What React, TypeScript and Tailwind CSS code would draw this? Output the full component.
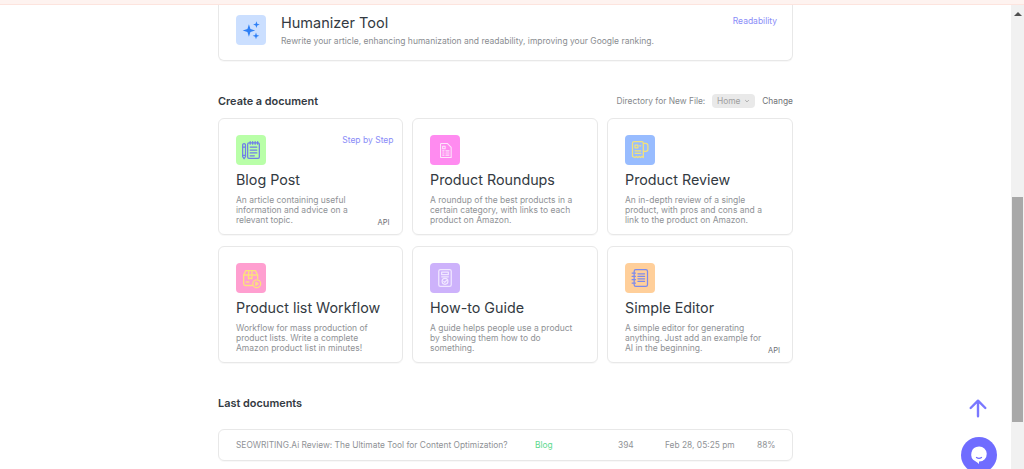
import React from 'react';

const iconStroke = { fill: 'none', strokeWidth: 1.5, strokeLinecap: 'round', strokeLinejoin: 'round' } as const;

const Sparkles = () => (
  <svg viewBox="0 0 24 24" className="w-[20px] h-[20px]" fill="#2f80f6">
    <path d="M9.5 5 L11.3 10.7 L17 12.5 L11.3 14.3 L9.5 20 L7.7 14.3 L2 12.5 L7.7 10.7 Z" />
    <path d="M18.5 1.5 L19.5 4.5 L22.5 5.5 L19.5 6.5 L18.5 9.5 L17.5 6.5 L14.5 5.5 L17.5 4.5 Z" />
    <path d="M18 15 L19 18 L22 19 L19 20 L18 23 L17 20 L14 19 L17 18 Z" />
  </svg>
);

const BlogIcon = () => (
  <svg viewBox="0 0 24 24" className="w-[20px] h-[20px]" stroke="#6f7fe8" {...iconStroke}>
    <path d="M2 6a1.7 1.7 0 0 1 3.4 0v14l-1.7 2.5L2 20Z" />
    <path d="M2 8.5h3.4M2 18.5h3.4" />
    <rect x="8" y="3.5" width="14" height="18.5" rx="1.5" />
    <path d="M11 2v3M14 2v3M17 2v3M20 2v3" />
    <path d="M11 8.5h8M11 12h8M11 15.5h8M11 19h5" />
  </svg>
);

const RoundupIcon = () => (
  <svg viewBox="0 0 24 24" className="w-[17px] h-[17px]" stroke="#fde6fb" {...iconStroke}>
    <path d="M6 2h8.5L20 7.5V22H6a1 1 0 0 1-1-1V3a1 1 0 0 1 1-1Z" />
    <rect x="8" y="6" width="3.5" height="3.5" />
    <path d="M8 12.5h2M12.5 12.5h4.5M8 15.5h2M12.5 15.5h4.5M8 18.5h2M12.5 18.5h4.5" />
  </svg>
);

const ReviewIcon = () => (
  <svg viewBox="0 0 24 24" className="w-[20px] h-[20px]" stroke="#f3e27a" {...iconStroke}>
    <path d="M3 4a2 2 0 0 1 2-2h9a2 2 0 0 1 2 2v17l-1.7-1.3-1.7 1.3-1.6-1.3-1.7 1.3-1.6-1.3-1.7 1.3L3 19.7Z" />
    <path d="M16 4h3a2.5 2.5 0 0 1 2.5 2.5V11a2.5 2.5 0 0 1-2.5 2.5h-3" />
    <rect x="6" y="6" width="3.5" height="3.5" />
    <path d="M6 13h7M6 16h7M11.5 7h1.5" />
  </svg>
);

const WorkflowIcon = () => (
  <svg viewBox="0 0 24 24" className="w-[21px] h-[21px]" stroke="#fbe27c" {...iconStroke}>
    <path d="M13 20H5a2 2 0 0 1-2-2V8l2.5-5h11L19 8v4" />
    <path d="M3 8h16M9 3 8.5 8v4.5l2-1 2 1V8L12.500 3" />
    <path d="M6 16h3" />
    <circle cx="18" cy="18" r="4.5" />
    <path d="M17 16.2v3.6l2.5-1.8Z" />
  </svg>
);

const GuideIcon = () => (
  <svg viewBox="0 0 24 24" className="w-[20px] h-[20px]" stroke="#f1e7ff" {...iconStroke}>
    <rect x="4.5" y="2" width="15" height="20" rx="2" />
    <rect x="8" y="5" width="8" height="3" />
    <path d="M8 10.5h8" />
    <circle cx="12" cy="16" r="3.5" />
    <path d="m10.5 16 1.2 1.2 2-2.2" />
  </svg>
);

const EditorIcon = () => (
  <svg viewBox="0 0 24 24" className="w-[20px] h-[20px]" stroke="#7d8bec" {...iconStroke}>
    <rect x="5" y="2" width="16" height="20" rx="2" />
    <path d="M2.5 6h4M2.5 10h4M2.5 14h4M2.5 18h4" />
    <path d="M9.5 7h8M9.5 10h8M9.5 13h8M9.5 16h8" />
  </svg>
);

const cards = [
  { title: 'Blog Post', lines: ['An article containing useful', 'information and advice on a', 'relevant topic.'], bg: 'bg-[#b9ffa8]', icon: <BlogIcon />, step: true, api: true },
  { title: 'Product Roundups', lines: ['A roundup of the best products in a', 'certain category, with links to each', 'product on Amazon.'], bg: 'bg-[#ff8bf0]', icon: <RoundupIcon /> },
  { title: 'Product Review', lines: ['An in-depth review of a single', 'product, with pros and cons and a', 'link to the product on Amazon.'], bg: 'bg-[#98bcff]', icon: <ReviewIcon /> },
  { title: 'Product list Workflow', lines: ['Workflow for mass production of', 'product lists. Write a complete', 'Amazon product list in minutes!'], bg: 'bg-[#ff9fd0]', icon: <WorkflowIcon /> },
  { title: 'How-to Guide', lines: ['A guide helps people use a product', 'by showing them how to do', 'something.'], bg: 'bg-[#cdb2fb]', icon: <GuideIcon /> },
  { title: 'Simple Editor', lines: ['A simple editor for generating', 'anything. Just add an example for', 'AI in the beginning.'], bg: 'bg-[#ffcf9a]', icon: <EditorIcon />, api: true },
];

const App: React.FC = () => {
  return (
    <div className="relative flex h-[469px] w-[1024px] overflow-hidden bg-white font-['Inter',sans-serif]">
      {/* Main column */}
      <div className="flex-1 min-w-0">
        <div className="h-[5px] bg-[#fef3f0] border-b border-[#fde4de]" />
        <div className="w-[575px] ml-[218px]">
          {/* Humanizer card */}
          <div className="relative flex h-[56px] rounded-b-md border border-t-0 border-[#e8e8e8] pl-[17px] pt-[10px] shadow-[0_1px_1px_rgba(0,0,0,0.03)]">
            <div className="flex h-[30px] w-[30px] items-center justify-center rounded bg-[#cbdfff]">
              <Sparkles />
            </div>
            <div className="ml-[15px]">
              <div className="text-[14.5px] leading-[16px] text-[#333a42]">Humanizer Tool</div>
              <div className="mt-[4px] text-[8.5px] leading-[12px] text-[#8a8d91]">
                Rewrite your article, enhancing humanization and readability, improving your Google ranking.
              </div>
            </div>
            <span className="absolute right-[15px] top-[10px] text-[8.5px] leading-[12px] text-[#8a8cf8]">Readability</span>
          </div>

          {/* Create a document */}
          <div className="mt-[32px] flex h-[16px] items-center justify-between">
            <h2 className="text-[10.9px] font-semibold text-[#333a42]">Create a document</h2>
            <div className="flex items-center text-[8.4px] text-[#85888c]">
              <span>Directory for New File:</span>
              <span className="ml-[7px] flex h-[14px] w-[43px] items-center justify-center gap-[4px] rounded-sm bg-[#e9e9e9] text-[#a0a0a0]">
                Home
                <svg viewBox="0 0 10 10" className="h-[6px] w-[6px]" fill="none" stroke="#999" strokeWidth="1.3">
                  <path d="m2 3.5 3 3 3-3" />
                </svg>
              </span>
              <span className="ml-[7px] text-[#6f7276]">Change</span>
            </div>
          </div>

          <div className="mt-[9px] grid grid-cols-[184.5px_185.5px_186px] gap-x-[9.5px] gap-y-[11px]">
            {cards.map((card) => (
              <div
                key={card.title}
                className="relative h-[117px] rounded-md border border-[#e8e8e8] pl-[17px] pt-[16px] shadow-[0_1px_1px_rgba(0,0,0,0.03)]"
              >
                <div className={`flex h-[30px] w-[30px] items-center justify-center rounded ${card.bg}`}>{card.icon}</div>
                <div className="mt-[6px] text-[14.3px] leading-[18px] text-[#333a42]">{card.title}</div>
                <div className="mt-[6px] text-[8.5px] leading-[10px] text-[#8f9296]">
                  {card.lines.map((line) => (
                    <div key={line}>{line}</div>
                  ))}
                </div>
                {card.step && (
                  <span className="absolute right-[8px] top-[15px] text-[8.5px] leading-[12px] text-[#8a8cf8]">Step by Step</span>
                )}
                {card.api && (
                  <span className="absolute bottom-[6px] right-[12px] text-[7.5px] leading-[10px] text-[#6b6e72]">API</span>
                )}
              </div>
            ))}
          </div>

          {/* Last documents */}
          <h2 className="mt-[32px] text-[10.9px] leading-[16px] font-semibold text-[#333a42]">Last documents</h2>
          <div className="mt-[18px] flex h-[32px] items-center rounded-md border border-[#e8e8e8] pl-[17px] text-[8.4px] text-[#8f9296] shadow-[0_1px_1px_rgba(0,0,0,0.03)]">
            <span className="w-[299px] whitespace-nowrap">SEOWRITING.Ai Review: The Ultimate Tool for Content Optimization?</span>
            <span className="w-[83px] text-[#5ed98e]">Blog</span>
            <span className="w-[47px]">394</span>
            <span className="w-[92px] whitespace-nowrap">Feb 28, 05:25 pm</span>
            <span>88%</span>
          </div>
        </div>
      </div>

      {/* Scrollbar */}
      <div className="w-[13px] shrink-0 bg-[#f1f1f1]">
        <div className="h-[5px] bg-[#fef3f0] border-b border-[#fde4de]" />
        <div className="flex h-[11px] items-end justify-center">
          <div className="h-0 w-0 border-x-[4px] border-b-[4px] border-x-transparent border-b-[#505050]" />
        </div>
        <div className="ml-[1px] mt-[181px] h-[225px] w-[11px] bg-[#a8a8a8]" />
      </div>

      {/* Scroll to top */}
      <svg viewBox="0 0 24 24" className="absolute left-[967px] top-[397px] h-[22px] w-[22px]" fill="none" stroke="#7a78ff" strokeWidth="2.6" strokeLinecap="round" strokeLinejoin="round">
        <path d="M12 21V4M4 12l8-8 8 8" />
      </svg>

      {/* Chat bubble */}
      <div className="absolute left-[961px] top-[437px] flex h-[36px] w-[36px] items-center justify-center rounded-full bg-[#6f6cff]">
        <svg viewBox="0 0 24 24" className="h-[24px] w-[24px]">
          <path d="M12 3.5a7.8 7.8 0 0 0-3.6 14.7c1.2.7 2.6 1.8 3.6 2.8v-2.500h.5A7.5 7.5 0 0 0 12 3.5Z" fill="#fff" />
          <path d="M9.5 14.500c1.500 1 3.500 1 5 0" fill="none" stroke="#6f6cff" strokeWidth="1.3" strokeLinecap="round" />
        </svg>
      </div>
    </div>
  );
};

export default App;
